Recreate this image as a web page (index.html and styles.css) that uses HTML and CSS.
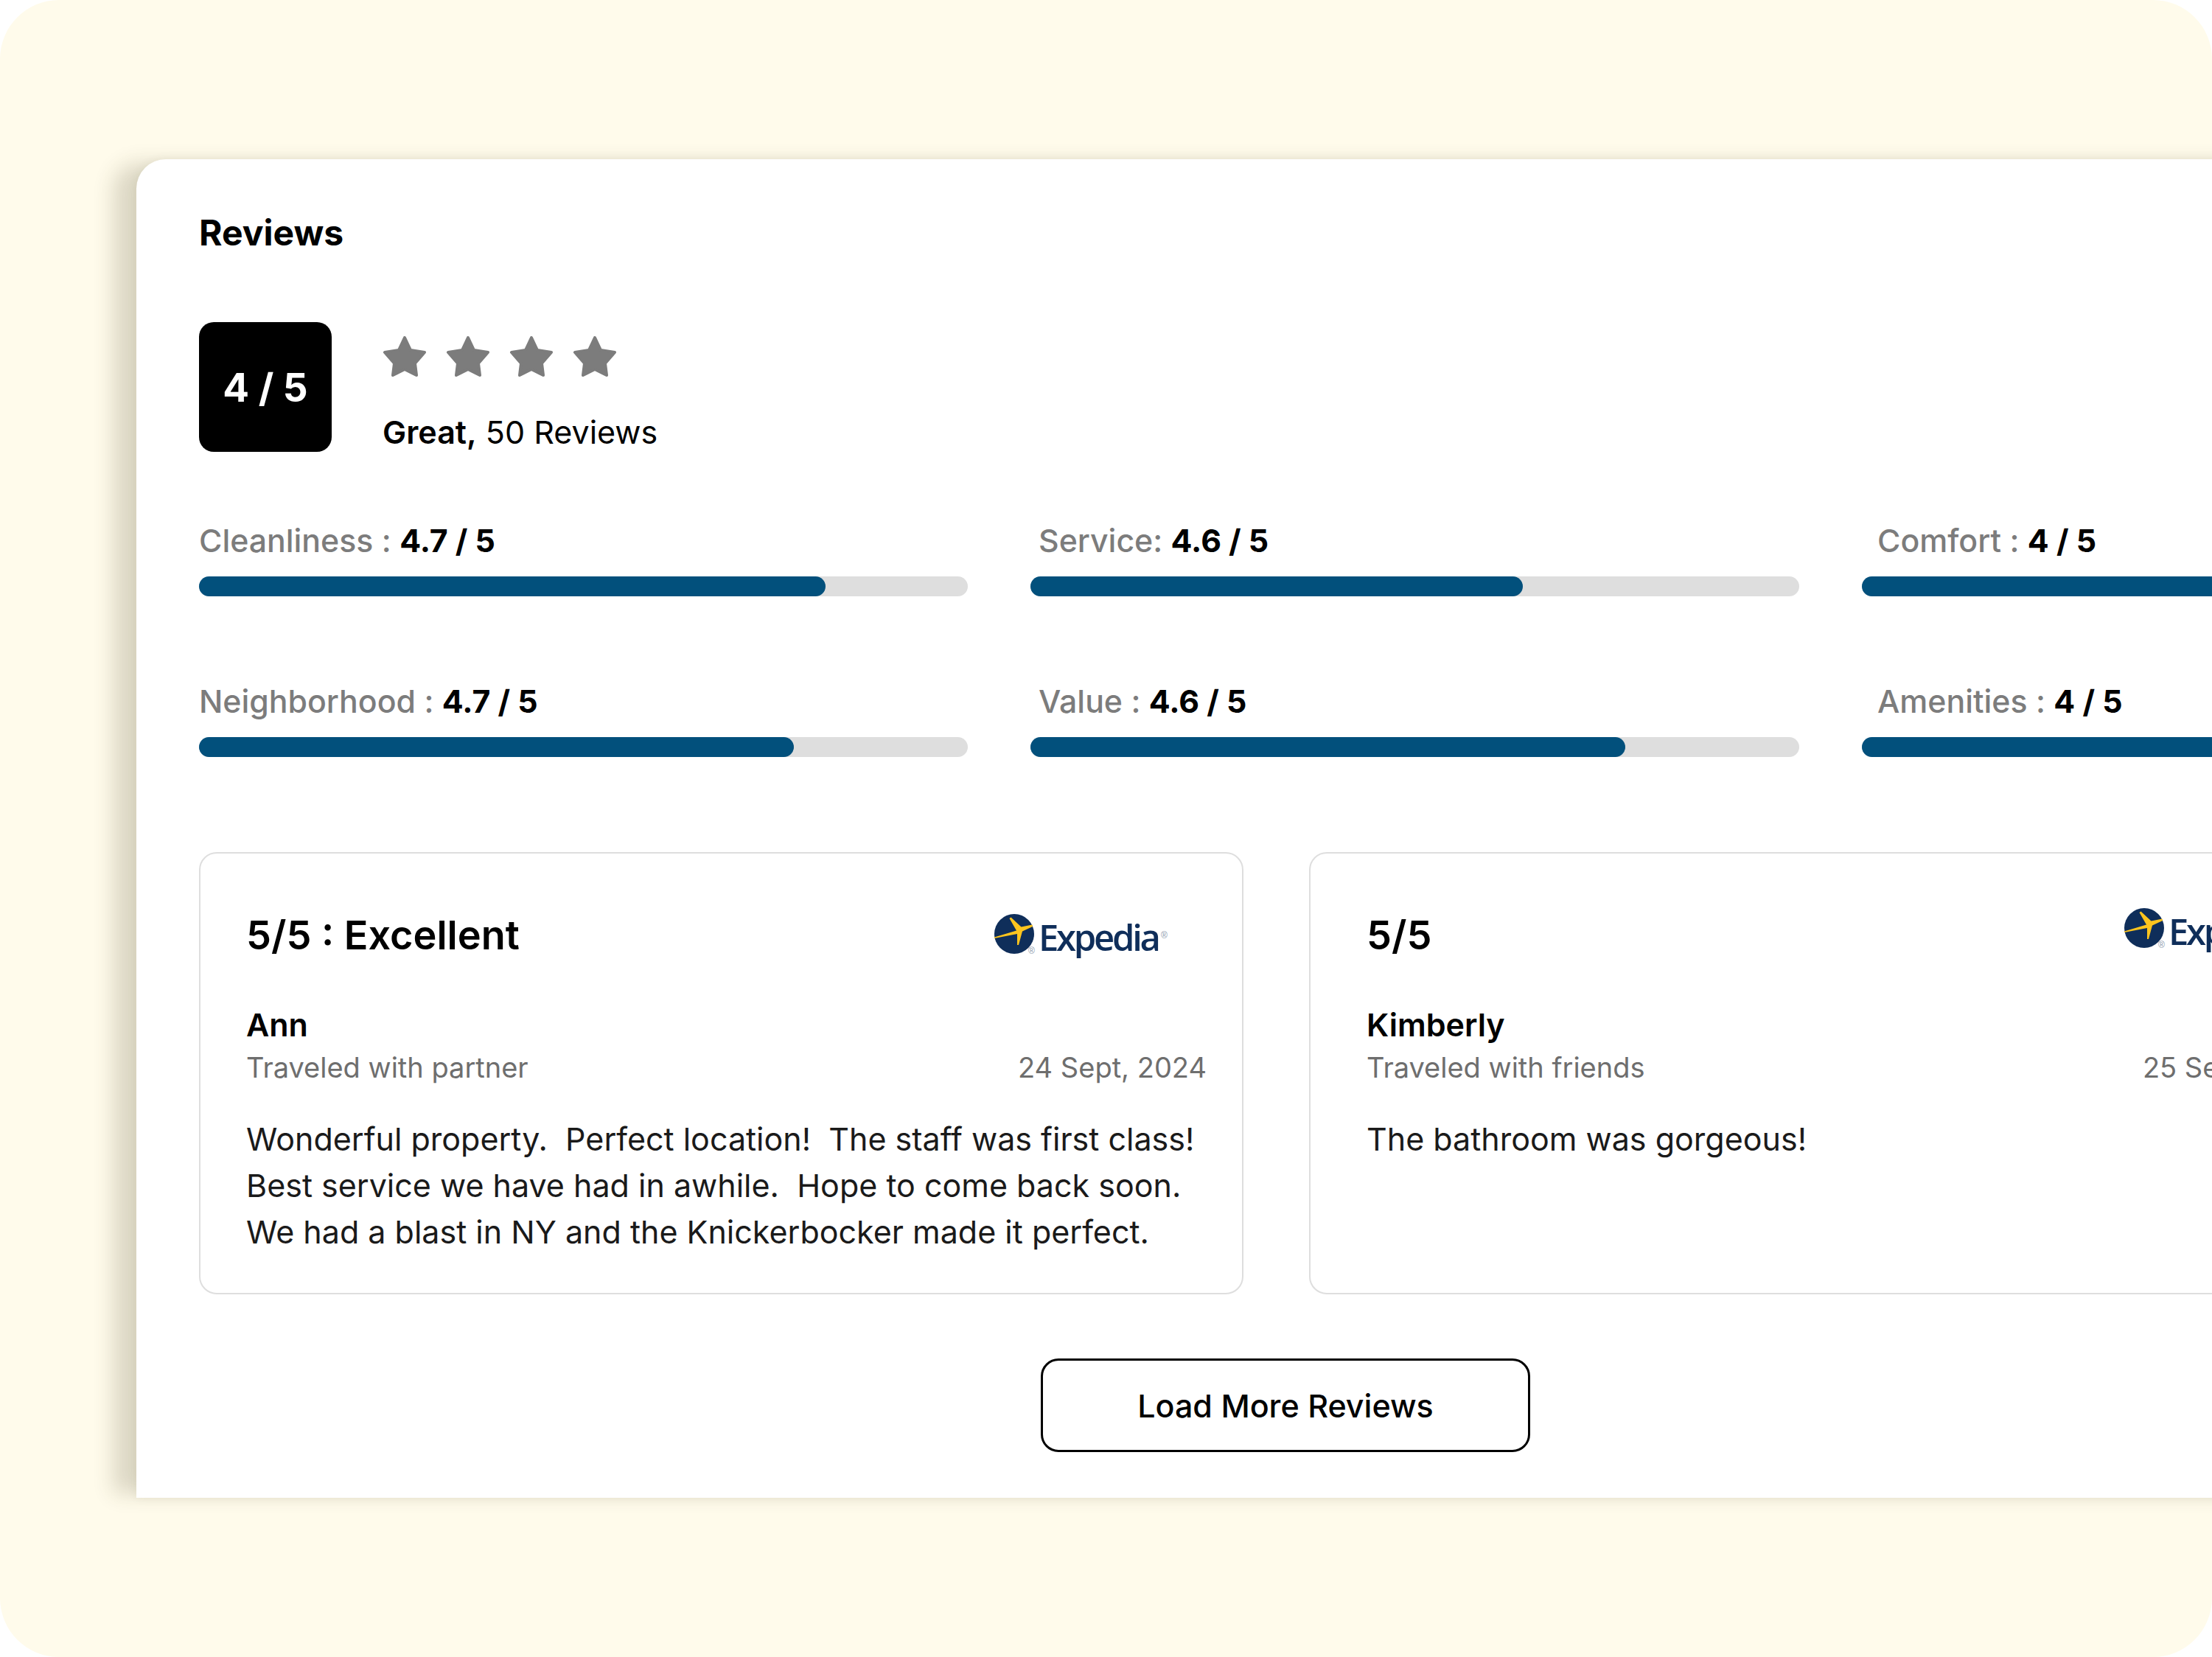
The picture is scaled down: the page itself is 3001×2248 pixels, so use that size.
FILE: index.html
```
<!DOCTYPE html>
<html lang="en">
<head>
    <meta charset="UTF-8">
    <title>Reviews</title>
    <link rel="stylesheet" href="styles.css">
</head>
<body>
    <div class="backdrop">
        <section class="panel">
            <h1 class="panel-title">Reviews</h1>

            <div class="summary">
                <div class="score-box">4 / 5</div>
                <div class="summary-info">
                    <div class="stars">
                        <svg class="star" viewBox="0 0 60 57"><path d="M30 3 L38 20 L57 23 L44 38 L46 54 L30 46 L14 54 L16 38 L3 23 L22 20 Z"/></svg>
                        <svg class="star" viewBox="0 0 60 57"><path d="M30 3 L38 20 L57 23 L44 38 L46 54 L30 46 L14 54 L16 38 L3 23 L22 20 Z"/></svg>
                        <svg class="star" viewBox="0 0 60 57"><path d="M30 3 L38 20 L57 23 L44 38 L46 54 L30 46 L14 54 L16 38 L3 23 L22 20 Z"/></svg>
                        <svg class="star" viewBox="0 0 60 57"><path d="M30 3 L38 20 L57 23 L44 38 L46 54 L30 46 L14 54 L16 38 L3 23 L22 20 Z"/></svg>
                    </div>
                    <p class="summary-text"><strong>Great,</strong> 50 Reviews</p>
                </div>
            </div>

            <div class="ratings">
                <div class="rating">
                    <p class="rating-label">Cleanliness : <strong>4.7 / 5</strong></p>
                    <div class="track"><div class="fill" style="width: 81.5%"></div></div>
                </div>
                <div class="rating rating-mid">
                    <p class="rating-label">Service: <strong>4.6 / 5</strong></p>
                    <div class="track"><div class="fill" style="width: 64%"></div></div>
                </div>
                <div class="rating rating-end">
                    <p class="rating-label">Comfort : <strong>4 / 5</strong></p>
                    <div class="track"><div class="fill" style="width: 80%"></div></div>
                </div>
                <div class="rating">
                    <p class="rating-label">Neighborhood : <strong>4.7 / 5</strong></p>
                    <div class="track"><div class="fill" style="width: 77.4%"></div></div>
                </div>
                <div class="rating rating-mid">
                    <p class="rating-label">Value : <strong>4.6 / 5</strong></p>
                    <div class="track"><div class="fill" style="width: 77.4%"></div></div>
                </div>
                <div class="rating rating-end">
                    <p class="rating-label">Amenities : <strong>4 / 5</strong></p>
                    <div class="track"><div class="fill" style="width: 80%"></div></div>
                </div>
            </div>

            <div class="cards">
                <article class="card">
                    <div class="card-head">
                        <h2>5/5 : Excellent</h2>
                        <svg class="logo" viewBox="0 0 240 60">
                            <circle cx="27" cy="27" r="27" fill="#0f2e5a"/>
                            <path fill="#fcc41e" d="M0 31.5 L30 22.5 L20.5 6 L22.5 4.5 L36.5 17.5 L51.5 14.5 L52 17 L38 23.5 L33 42 L31 42 L31 27 L0 33 Z"/>
                            <text class="logo-mark" x="46" y="54">®</text>
                            <text class="logo-name" x="60" y="50" textLength="166">Expedia</text>
                            <text class="logo-mark" x="226" y="33">®</text>
                        </svg>
                    </div>
                    <h3>Ann</h3>
                    <div class="card-meta"><span>Traveled with partner</span><span>24 Sept, 2024</span></div>
                    <p class="card-body">Wonderful property.  Perfect location!  The staff was first class!
Best service we have had in awhile.  Hope to come back soon.
We had a blast in NY and the Knickerbocker made it perfect.</p>
                </article>
                <article class="card card-second">
                    <div class="card-head">
                        <h2>5/5</h2>
                        <svg class="logo" viewBox="0 0 240 60">
                            <circle cx="27" cy="27" r="27" fill="#0f2e5a"/>
                            <path fill="#fcc41e" d="M0 31.5 L30 22.5 L20.5 6 L22.5 4.5 L36.5 17.5 L51.5 14.5 L52 17 L38 23.5 L33 42 L31 42 L31 27 L0 33 Z"/>
                            <text class="logo-mark" x="46" y="54">®</text>
                            <text class="logo-name" x="60" y="50" textLength="166">Expedia</text>
                            <text class="logo-mark" x="226" y="33">®</text>
                        </svg>
                    </div>
                    <h3>Kimberly</h3>
                    <div class="card-meta"><span>Traveled with friends</span><span>25 Sept, 2024</span></div>
                    <p class="card-body">The bathroom was gorgeous!</p>
                </article>
            </div>

            <div class="load-more">
                <button type="button" class="load-button">Load More Reviews</button>
            </div>
        </section>
    </div>
</body>
</html>
```
FILE: styles.css
```
* {
    box-sizing: border-box;
}

body {
    margin: 0;
    background-color: #fff;
    font-family: Inter, "Liberation Sans", sans-serif;
    color: #000;
}

.backdrop {
    width: 3001px;
    height: 2248px;
    padding: 216px 0 0 185px;
    overflow: hidden;
    background-color: #fffbeb;
    border-radius: 80px;
}

.panel {
    width: 3400px;
    height: 1816px;
    padding: 70px 85px 0;
    background-color: #fff;
    border-radius: 40px 40px 0 0;
    box-shadow: -37px 0 28px -6px rgba(70, 65, 30, 0.19), 0 0 14px rgba(70, 65, 30, 0.07);
}

.panel-title {
    margin: 0;
    font-size: 48px;
    line-height: 60px;
    font-weight: 700;
}

.summary {
    display: flex;
    gap: 69px;
    margin-top: 91px;
}

.score-box {
    display: flex;
    align-items: center;
    justify-content: center;
    width: 180px;
    height: 176px;
    padding-top: 2px;
    background-color: #000;
    border-radius: 20px;
    color: #fff;
    font-size: 53px;
    font-weight: 700;
}

.summary-info {
    padding-top: 18px;
}

.stars {
    display: flex;
    gap: 26px;
}

.star {
    width: 60px;
    height: 57px;
    fill: #7c7c7c;
    stroke: #7c7c7c;
    stroke-width: 4;
    stroke-linejoin: round;
}

.summary-text {
    margin: 46px 0 0;
    font-size: 43px;
    line-height: 56px;
}

.summary-text strong {
    font-weight: 600;
}

.ratings {
    display: grid;
    grid-template-columns: repeat(3, 1043px);
    column-gap: 85px;
    row-gap: 115px;
    margin-top: 92px;
}

.rating-label {
    margin: 0 0 20px;
    font-size: 42.8px;
    line-height: 56px;
    font-weight: 500;
    color: #7c7c7c;
}

.rating-label strong {
    font-weight: 700;
    color: #000;
}

.rating-mid .rating-label {
    padding-left: 11px;
}

.rating-end .rating-label {
    padding-left: 21px;
}

.track {
    height: 27px;
    background-color: #dedede;
    border-radius: 14px;
}

.fill {
    height: 100%;
    background-color: #02507c;
    border-radius: 14px;
}

.cards {
    display: flex;
    gap: 89px;
    margin-top: 129px;
}

.card {
    flex: 0 0 1417px;
    height: 600px;
    padding: 50px 48px 0 62px;
    border: 2px solid #dedede;
    border-radius: 24px;
}

.card-second {
    flex-basis: 1436px;
    padding-left: 76px;
}

.card-head {
    display: flex;
    align-items: center;
    justify-content: space-between;
    height: 120px;
}

.card-head h2 {
    margin: 0;
    font-size: 54px;
    font-weight: 600;
}

.logo {
    width: 240px;
    height: 60px;
    margin: 4px 48px 0 0;
}

.card-second .logo {
    margin: -12px 40px 0 0;
}

.logo-name {
    font-family: "Open Sans", sans-serif;
    font-size: 49px;
    font-weight: 600;
    fill: #0f2e5a;
}

.logo-mark {
    font-family: "Liberation Sans", sans-serif;
    font-size: 12px;
    fill: #8a97ab;
}

.card h3 {
    margin: 34px 0 0;
    font-size: 43px;
    line-height: 56px;
    font-weight: 600;
}

.card-meta {
    display: flex;
    justify-content: space-between;
    margin-top: 2px;
    font-size: 38px;
    line-height: 56px;
    color: #6e6e6e;
}

.card-body {
    margin: 38px 0 0;
    font-size: 43px;
    line-height: 63px;
    white-space: pre-wrap;
    color: #1a1a1a;
}

.load-more {
    display: flex;
    justify-content: center;
    margin-top: 87px;
    padding-right: 282px;
}

.load-button {
    width: 664px;
    height: 127px;
    background-color: #fff;
    border: 3px solid #000;
    border-radius: 24px;
    font-family: Inter, "Liberation Sans", sans-serif;
    font-size: 43px;
    font-weight: 500;
    color: #000;
}
```
